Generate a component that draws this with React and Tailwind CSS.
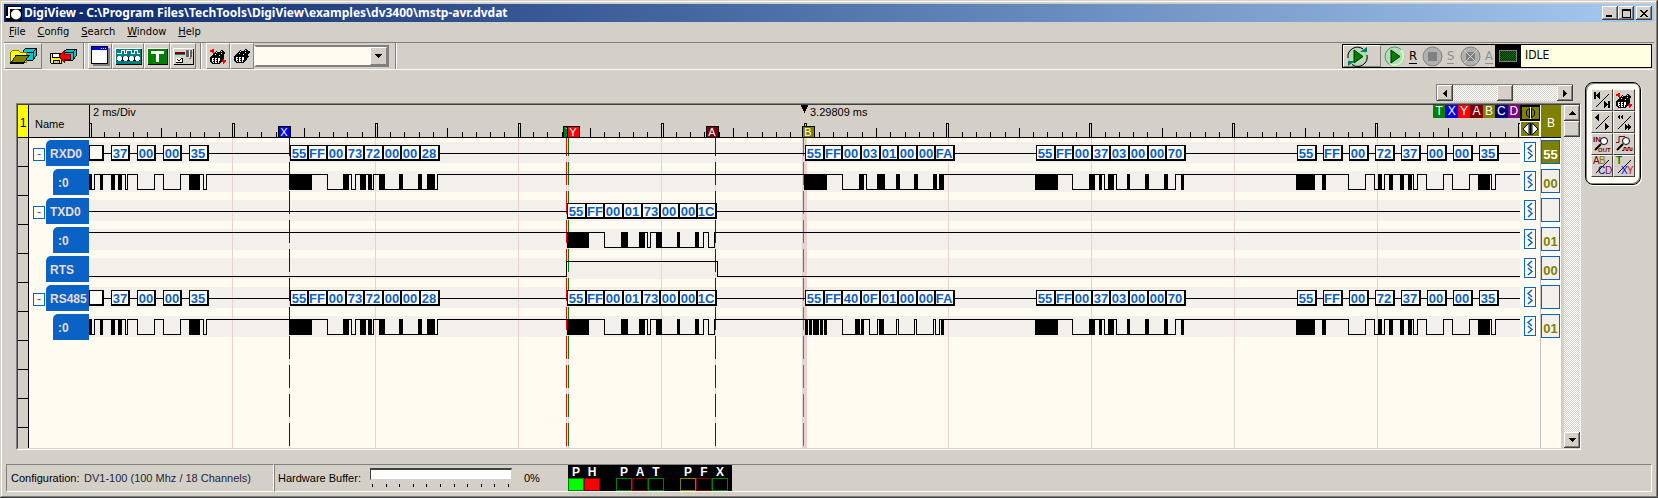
import React from "react";

const SANS = "font-['DejaVu_Sans_Condensed','DejaVu_Sans',sans-serif]";
const ARIAL = "font-['Liberation_Sans',sans-serif]";
const RAISED =
  "bg-[#d4d0c8] border border-t-white border-l-white border-b-[#808080] border-r-[#808080]";
const WIN_BTN =
  "bg-[#d4d0c8] shadow-[inset_-1px_-1px_0_#404040,inset_1px_1px_0_#fff,inset_-2px_-2px_0_#808080]";
const TRACK =
  "bg-[repeating-conic-gradient(#fff_0_25%,#d4d0c8_0_50%)] bg-[length:2px_2px]";

const COLORS = { k: "#000000", w: "#ffffff", r: "#ff0000" };

function Pixels({ rows, className }) {
  const w = Math.max(...rows.map((r) => r.length));
  const rects = [];
  rows.forEach((row, y) => {
    let x = 0;
    while (x < row.length) {
      const ch = row[x];
      let e = x + 1;
      while (e < row.length && row[e] === ch) e++;
      if (COLORS[ch]) rects.push(<rect key={x + "-" + y} x={x} y={y} width={e - x} height="1" fill={COLORS[ch]} />);
      x = e;
    }
  });
  return (
    <svg width={w} height={rows.length} shapeRendering="crispEdges" aria-hidden="true" className={className}>
      {rects}
    </svg>
  );
}

const BINOC = [
  "...........kk...",
  "......k...kwkk..",
  ".....kwkkkkkkkkk",
  "....kkkkkkkwkkkk",
  "...kkwkkkkkkkkk.",
  "..kkkkkkkwkkkk..",
  ".kkkkkkkkkkkkk..",
  "kkkkkkkkkkkkkkk.",
  "kkwwkwwkwwkkkk..",
  "kkwkkwkkwwkkk...",
  "kkwwkwwkwwkkk...",
  "kkwkkwkkwkkk....",
  ".kkwkwwkwkk.....",
  "..kkkkkkkk......",
];

const BINOC_RED = [
  "..rr............",
  "rrrr.......kk...",
  "rrrr..k...kwkk..",
  "..rr.kwkkkkkkkk.",
  "...rkkkkkkkwkkk.",
  "...kkwkkkkkkkk..",
  "..kkkkkkkwkkkk..",
  ".kkkkkkkkkkkkk..",
  "kkkkkkkkkkkkkk..",
  "kkwwkwwkwwkkkk..",
  "kkwkkwkkwwkkkr..",
  "kkwwkwwkwwkkrrrr",
  "kkwkkwkkwkkkrrrr",
  ".kkwkwwkwkk..rr.",
  "..kkkkkkkk...r..",
];

function OpenIcon() {
  return (
    <svg width="28" height="16" aria-hidden="true" shapeRendering="crispEdges">
      <path d="M14 3l3-3h10v8l-3 4h-9z" fill="#00c8d0" stroke="#000" />
      <path d="M15 4h9l3-3M24 4v8" fill="none" stroke="#000" />
      <path d="M1 14V5l3-3h5l2 2h6v10z" fill="#ffff00" stroke="#808000" />
      <path d="M2 14.500l5-7h13l-5 7z" fill="#808000" stroke="#000" />
      <path d="M1 15h14" stroke="#000" />
    </svg>
  );
}
function SaveIcon() {
  return (
    <svg width="28" height="17" aria-hidden="true" shapeRendering="crispEdges">
      <path d="M15 4l3-3h9v7l-3 4h-9z" fill="#00c8d0" stroke="#000" />
      <path d="M15 4h9l3-3M24 4v8" fill="none" stroke="#000" />
      <path d="M1 5h11v10H2l-1-1z" fill="#ffff00" stroke="#000" />
      <path d="M3 5h7v4H3z" fill="#fff" stroke="#000" />
      <path d="M4 12h6v3H4z" fill="#c0c0c0" stroke="#000" />
      <path d="M10 8l5-5v3h6v5h-6v3z" fill="#ff0000" stroke="#800000" />
    </svg>
  );
}
function WindowIcon() {
  return (
    <svg width="19" height="20" aria-hidden="true" shapeRendering="crispEdges">
      <path d="M2 2h17v18H2z" fill="#808080" />
      <path d="M0 0h17v18H0z" fill="#000" />
      <path d="M1 4h15v13H1z" fill="#fff" />
      <path d="M1 1h15v3H1z" fill="#0000ff" />
      <path d="M10 2h1v1h-1zM12 2h1v1h-1zM14 2h1v1h-1z" fill="#fff" />
    </svg>
  );
}
function DeviceIcon() {
  return (
    <svg width="27" height="17" aria-hidden="true" shapeRendering="crispEdges">
      <path d="M1 1h26v16H1z" fill="#000" />
      <path d="M0 0h26v16H0z" fill="#fff" />
      <path d="M1 1h25v15H1z" fill="#008080" />
      <path d="M2 5.500h4v-3h3v3h2v-3h5v3h3v-3h3v3h3" fill="none" stroke="#fff" />
      <path d="M2 9h23v4H2z" fill="#000" />
      {[2, 8, 14, 20].map((x) => (
        <path key={x} d={`M${x + 1} 8h3v1h1v3h-1v1h-3v-1h-1v-3h1z`} fill="#fff" />
      ))}
    </svg>
  );
}
function TriggerIcon() {
  return (
    <svg width="21" height="17" aria-hidden="true" shapeRendering="crispEdges">
      <path d="M1 1h20v16H1z" fill="#000" />
      <path d="M0 0h20v16H0z" fill="#fff" />
      <path d="M1 1h19v15H1z" fill="#008000" />
      <path d="M4 3h13v3h-5v8H9V6H4z" fill="#fff" />
    </svg>
  );
}
function OptionsIcon() {
  return (
    <svg width="21" height="17" aria-hidden="true" shapeRendering="crispEdges">
      <path d="M1 1h20v16H1z" fill="#000" />
      <path d="M0 0h20v16H0z" fill="#fff" />
      <path d="M1 1h19v15H1z" fill="#d4d0c8" />
      <path d="M2 4h10v2H2z" fill="#800000" />
      <path d="M2 6h10v1H2z" fill="#008080" />
      <path d="M13 2h6v7h-1v2h-2v-2h-3z" fill="#606060" />
      <path d="M16 2h1v8h-1z" fill="#fff" />
      <path d="M3 9.500h6v5H3z" fill="#fff" />
      <path d="M3 14.500h6v-5" fill="none" stroke="#000" />
      <path d="M4 11l2 2 3-3" fill="none" stroke="#000" />
    </svg>
  );
}

function Round({ kind }) {
  const on = kind === "play";
  return (
    <svg width="21" height="21" aria-hidden="true" className="shrink-0">
      <circle cx="10.500" cy="10.500" r="9.500" fill={on ? "#b4dcb8" : "#b0b0b0"} stroke={on ? "#40a070" : "#808080"} />
      {on && <path d="M17 4a9 9 0 0 1-11 14" fill="none" stroke="#d8f8c0" strokeWidth="2" />}
      {on && <path d="M7 4l9 6.500-9 6.500z" fill="#008000" stroke="#003000" />}
      {kind === "stop" && <path d="M6 6h9v9H6z" fill="#808080" />}
      {kind === "abort" && <path d="M6 6h9v9H6z" fill="#808080" />}
      {kind === "abort" && <path d="M4 4l13 13M17 4L4 17" stroke="#d0d0d0" />}
    </svg>
  );
}
function LoopIcon() {
  return (
    <svg width="21" height="21" aria-hidden="true">
      <circle cx="10.500" cy="10.500" r="9" fill="#b4dcb8" stroke="#a0d0a0" />
      <path d="M1 12a9.500 9.500 0 0 1 15-9M20 9a9.500 9.500 0 0 1-15 9.500" fill="none" stroke="#000" />
      <path d="M13 6h7V1zM8 15H1v5z" fill="#008060" />
      <path d="M7 4l9 6.500-9 6.500z" fill="#008000" stroke="#003000" />
    </svg>
  );
}

function Tri({ dir }) {
  const d = {
    up: "M3 0h1v1h1v1h1v1h1v1H0V3h1V2h1V1h1z",
    down: "M0 0h7v1H6v1H5v1H4v1H3V3H2V2H1V1H0z",
    left: "M0 3h1V2h1V1h1V0h1v7H3V6H2V5H1V4H0z",
    right: "M4 3H3V2H2V1H1V0H0v7h1V6h1V5h1V4h1z",
  }[dir];
  const v = dir === "up" || dir === "down";
  return (
    <svg width={v ? 7 : 4} height={v ? 4 : 7} shapeRendering="crispEdges" aria-hidden="true">
      <path d={d} fill="#000" />
    </svg>
  );
}

/* ---- capture data ---------------------------------------------------- */

const frame = (xs, vals) => vals.map((v, i) => [xs[i], xs[i + 1] - xs[i] + (i < vals.length - 1 ? 1 : 0), v]);
const spaced = (x0, vals) => vals.map((v, i) => [x0 + 26 * i, 20, v]);

const HEAD = [[89, 15, ""], [111, 19, "37"], [137, 19, "00"], [163, 19, "00"], [189, 20, "35"]];
const REQ = frame([290, 308, 327, 346, 364, 383, 401, 420, 440], ["55", "FF", "00", "73", "72", "00", "00", "28"]);
const TX = frame([567, 586, 604, 623, 642, 660, 679, 697, 717], ["55", "FF", "00", "01", "73", "00", "00", "1C"]);
const BX = [805, 824, 842, 861, 880, 898, 917, 935, 955];
const RESP_A = frame(BX, ["55", "FF", "00", "03", "01", "00", "00", "FA"]);
const RESP_B = frame(BX, ["55", "FF", "40", "0F", "01", "00", "00", "FA"]);
const POLL = frame([1036, 1055, 1073, 1092, 1110, 1129, 1148, 1166, 1186], ["55", "FF", "00", "37", "03", "00", "00", "70"]);
const TAIL = spaced(1297, ["55", "FF", "00", "72", "37", "00", "00", "35"]);

const W_HEAD = "B92 L94 H100 B103 H111 B115 H118 B122 H125 L127 H137 L154 H163 L180 H189 B200 H203 L206";
const W_REQ = "H289 B312 H327 L343 B349 H351 L355 H360 B366 H368 B372 L373 H379 B385 L399 B403 L418 B422 L427 B435 L437";
const W_TX = "H567 B589 H604 L621 B628 L639 B645 H647 L650 H656 B662 L677 B680 L695 B699 L703 H708 L714";
const W_RA = "H804 B827 H842 L859 B864 H866 L877 B885 L896 B900 L914 B918 L933 B937 L939 B944";
const W_RB = "H805 B808 H809 B812 H813 B819 H820 B823 H824 B827 H842 L855 B860 L861 B864 H869 L877 H879 B884 L896 H898 L914 H916 L933 H935 L939 H941 B944";
const W_POLL = "H1035 B1058 H1072 L1089 B1095 H1099 B1102 H1104 L1108 B1114 H1116 L1127 B1130 L1145 B1149 L1164 B1168 L1175 H1181 B1184";
const W_TAIL = "H1296 B1315 H1322 B1326 H1348 L1365 H1374 L1378 B1382 L1384 H1389 B1393 H1400 B1404 H1408 B1412 H1413 L1417 H1426 L1443 H1452 L1469 H1478 B1490 H1491 L1495 H4000";

const CHANNELS = [
  { name: "RXD0", group: true, value: "55", hot: true, bytes: [...HEAD, ...REQ, ...RESP_A, ...POLL, ...TAIL] },
  { name: ":0", value: "00", wave: [W_HEAD, W_REQ, W_RA, W_POLL, W_TAIL] },
  { name: "TXD0", group: true, value: "", bytes: TX },
  { name: ":0", value: "01", wave: [W_TX, "H4000"] },
  { name: "RTS", value: "00", wave: ["L566 H717 L4000"] },
  { name: "RS485", group: true, value: "", bytes: [...HEAD, ...REQ, ...TX, ...RESP_B, ...POLL, ...TAIL] },
  { name: ":0", value: "01", wave: [W_HEAD, W_REQ, W_TX, W_RB, W_POLL, W_TAIL] },
];

const CURSORS = [
  [289, "#0000ff"], [566, "#ff0000"], [568, "#008000"], [715, "#800000"], [803, "#808000"],
];
const MARKERS = [
  ["T", 563, "#008000"], ["X", 278, "#0000ff"], ["Y", 567, "#ff0000"], ["A", 706, "#800000"], ["B", 802, "#808000"],
];
const GRID = [232, 375, 518, 661, 948, 1091, 1234, 1377, 1520, 1663, 1806, 1949];

function Wave({ top, parts }) {
  const hi = top + 5;
  const lo = top + 20;
  let x = 89;
  let prev = "";
  const out = [];
  parts.join(" ").split(" ").forEach((seg, i) => {
    const kind = seg[0];
    const end = Number(seg.slice(1));
    if (kind === "B") out.push(<rect key={i} x={x} y={hi} width={end - x} height="16" />);
    else {
      out.push(<rect key={i} x={x} y={kind === "H" ? hi : lo} width={end - x} height="1" />);
      if (prev && prev !== kind && prev !== "B") out.push(<rect key={i + "e"} x={x} y={hi} width="1" height="16" />);
    }
    prev = kind;
    x = end;
  });
  return <g>{out}</g>;
}

function Bytes({ top, items }) {
  return (
    <g>
      <rect x="89" y={top + 13} width="4000" height="1" />
      {items.map(([x, w, v]) => (
        <g key={x}>
          <rect x={x} y={top + 5} width={w} height="16" />
          <rect x={x + 1} y={top + 6} width={w - 3} height="13" fill="#fffbf0" />
          <text x={x + Math.floor((w - 1) / 2)} y={top + 18} textAnchor="middle" fill="#0a62c4"
            className={ARIAL + " text-[13px] font-bold"}>{v}</text>
        </g>
      ))}
    </g>
  );
}

function Plot() {
  return (
    <svg className="block w-0 min-w-0 flex-1 self-stretch overflow-hidden" shapeRendering="crispEdges" role="img" aria-label="Captured signals">
      <g transform="translate(-89 -138)">
        {CHANNELS.map((c, i) => (
          <rect key={i} x="89" y={142 + 29 * i} width="4000" height="21" fill="#f3f0ec" />
        ))}
        {GRID.map((x) => <rect key={x} x={x} y="138" width="1" height="2000" fill="#e6d3d1" />)}
        <rect x="802" y="138" width="5" height="2000" fill="#e6d3d1" />
        {CURSORS.map(([x, color]) => (
          <g key={x}>
            <rect x={x} y="138" width="1" height="2000" fill="#e6d3d1" />
            <path d={`M${x}.500 133V446`} stroke={color} strokeDasharray="23 6" fill="none" />
          </g>
        ))}
        {CHANNELS.map((c, i) => c.bytes
          ? <Bytes key={i} top={140 + 29 * i} items={c.bytes} />
          : <Wave key={i} top={140 + 29 * i} parts={c.wave} />)}
      </g>
    </svg>
  );
}

function Ruler() {
  const ticks = [];
  for (let n = 0; n < 140; n++) {
    const x = Math.round(90 + 14.29 * n);
    if (n % 10 === 0) ticks.push(<path key={n} d={`M${x - 1}.500 137V123.500h2V137`} fill="#d4d0c8" stroke="#000" />);
    else ticks.push(<rect key={n} x={x} y={n % 5 === 0 ? 128 : 132} width="1" height={n % 5 === 0 ? 9 : 5} />);
  }
  return (
    <svg className="absolute inset-0 h-full w-full" shapeRendering="crispEdges" role="img" aria-label="Time ruler">
      <g transform="translate(-89 -105)">
        <rect x="89" y="105" width="1" height="33" />
        {ticks}
        {MARKERS.map(([t, x, color]) => (
          <g key={t}>
            <rect x={x} y="126" width="13" height="12" />
            <rect x={x + 1} y="127" width="11" height="11" fill={color} />
            <text x={x + 6} y="136" textAnchor="middle" fill="#fff" className={ARIAL + " text-[11px]"}>{t}</text>
          </g>
        ))}
        <path d="M801 105h7v2h-1v2h-1v2h-1v2h-1v-2h-1v-2h-1v-2h-1z" />
        <text x="93" y="116" className={ARIAL + " text-[11px]"}>2 ms/Div</text>
        <text x="810" y="116" className={ARIAL + " text-[11px]"}>3.29809 ms</text>
      </g>
    </svg>
  );
}

/* ---- chrome ----------------------------------------------------------- */

function TitleBar() {
  return (
    <header className="flex h-[18px] shrink-0 items-center bg-linear-to-r from-[#0a246a] to-[#a6caf0] pr-[2px] pl-[2px]">
      <svg width="16" height="16" aria-hidden="true">
        <path d="M0 1h16v15H0z" fill="#000" />
        <path d="M0 12h3V3h12" fill="none" stroke="#fff" strokeWidth="2" />
        <circle cx="10" cy="9.500" r="5" fill="#fff" />
      </svg>
      <h1 className="ml-[2px] flex-1 truncate font-['Noto_Sans',sans-serif] text-[12px] leading-4 font-bold text-white">
        DigiView - C:\Program Files\TechTools\DigiView\examples\dv3400\mstp-avr.dvdat
      </h1>
      <div className="flex">
        <button aria-label="Minimize" className={WIN_BTN + " flex h-[14px] w-4 items-end pb-[3px] pl-1"}>
          <span className="h-[2px] w-[6px] bg-black" />
        </button>
        <button aria-label="Maximize" className={WIN_BTN + " flex h-[14px] w-4 items-center justify-center"}>
          <span className="h-[9px] w-[9px] border border-t-2 border-black" />
        </button>
        <button aria-label="Close" className={WIN_BTN + " ml-[2px] flex h-[14px] w-4 items-center justify-center"}>
          <svg width="8" height="7" shapeRendering="crispEdges" aria-hidden="true">
            <path d="M0 0h2v1h1v1h2V1h1V0h2v1H7v1H6v1H5v1h1v1h1v1h1v1H6V6H5V5H3v1H2v1H0V6h1V5h1V4h1V3H2V2H1V1H0z" />
          </svg>
        </button>
      </div>
    </header>
  );
}

function ToolButton({ label, children, wide }) {
  return (
    <button aria-label={label} className={RAISED + " flex h-[26px] items-center justify-center " + wide}>
      {children}
    </button>
  );
}
const Divider = () => <span className="h-[26px] w-[2px] border-r border-l border-l-[#808080] border-r-white" />;

function Toolbar() {
  return (
    <div className="flex h-7 shrink-0 items-center border-t border-b border-t-[#808080] border-b-white">
      <ToolButton label="Open" wide="w-[38px]"><OpenIcon /></ToolButton>
      <button aria-label="Save" className="flex h-[26px] w-[41px] items-center justify-center"><SaveIcon /></button>
      <Divider />
      <div className="ml-[3px] flex">
        <ToolButton label="Window" wide="w-6"><WindowIcon /></ToolButton>
        <ToolButton label="Device" wide="w-8"><DeviceIcon /></ToolButton>
        <ToolButton label="Trigger" wide="w-[26px]"><TriggerIcon /></ToolButton>
        <ToolButton label="Options" wide="w-[26px]"><OptionsIcon /></ToolButton>
      </div>
      <span className="w-1" />
      <Divider />
      <div className="ml-1 flex">
        <ToolButton label="Find next edge" wide="w-6"><Pixels rows={BINOC_RED} /></ToolButton>
        <ToolButton label="Find" wide="w-6"><Pixels rows={BINOC} /></ToolButton>
      </div>
      <div className="flex h-[22px] w-[135px] border-2 border-t-[#808080] border-r-[#808080] border-b-[#808080] border-l-white bg-[#fffbf0]">
        <input aria-label="Search pattern" className="w-0 flex-1 bg-transparent px-1 text-[11px] outline-none" />
        <button aria-label="Show patterns" className={RAISED + " flex w-[17px] items-center justify-center"}><Tri dir="down" /></button>
      </div>
      <span className="w-[6px]" />
      <Divider />
      <div className="mr-[2px] ml-auto flex h-6 w-[310px] items-stretch border border-black">
        <button aria-label="Run continuously" className={RAISED + " flex w-[38px] items-center pl-[3px]"}><LoopIcon /></button>
        <button className={SANS + " flex w-[38px] items-center gap-1 pl-[3px] text-[13px] leading-4"}>
          <Round kind="play" /><span className="border-b border-black leading-[14px]">R</span>
        </button>
        <button className={SANS + " flex w-[38px] items-center gap-1 pl-[3px] text-[13px] text-[#909090]"}>
          <Round kind="stop" /><span className="border-b border-[#909090] leading-[14px]">S</span>
        </button>
        <button className={SANS + " flex w-[38px] items-center gap-1 pl-[3px] text-[13px] text-[#909090]"}>
          <Round kind="abort" /><span className="border-b border-[#909090] leading-[14px]">A</span>
        </button>
        <span className="flex w-[26px] items-center justify-center bg-black">
          <span className="h-3 w-[18px] border border-[#808080] bg-[repeating-conic-gradient(#007000_0_25%,#002800_0_50%)] bg-[length:2px_2px]" />
        </span>
        <output className={SANS + " flex-1 bg-[#ffffe1] pl-1 text-[12px] leading-[21px]"}>IDLE</output>
      </div>
    </div>
  );
}

const MARKER_TAGS = [
  ["T", "bg-[#008000]"], ["X", "bg-[#0000ff]"], ["Y", "bg-[#ff0000]"], ["A", "bg-[#800000]"],
  ["B", "bg-[#808000]"], ["C", "bg-[#000080]"], ["D", "bg-[#800080]"],
];

function Names() {
  return (
    <div className="w-[60px] shrink-0">
      {CHANNELS.map((c, i) => (
        <div key={i} className="flex h-[29px] items-start pt-[2px]">
          {c.group && (
            <button aria-label={"Collapse " + c.name}
              className={ARIAL + " mt-[8px] ml-1 h-[13px] w-[12px] shrink-0 border border-[#0a62c4] text-[12px] leading-[11px] text-[#0a62c4]"}>-</button>
          )}
          <span className={(c.name === ":0" ? "w-9 pl-[5px] " : "w-[43px] pl-1 ") + ARIAL +
            " ml-auto h-[26px] overflow-hidden rounded-tl-[5px] bg-[#0a62c4] text-[12px] leading-[29px] font-bold whitespace-nowrap text-[#e8dcd8]"}>
            {c.name}
          </span>
        </div>
      ))}
    </div>
  );
}

function SideButton({ label, children }) {
  return (
    <button aria-label={label}
      className="flex h-[22px] w-[22px] items-center justify-center border border-t-white border-l-white border-b-[#404040] border-r-[#404040] bg-[#d4d0c8]">
      {children}
    </button>
  );
}
const Slash = ({ children }) => (
  <svg width="20" height="20" shapeRendering="crispEdges" aria-hidden="true">
    <path d="M4 17L17 4" stroke="#000" />
    {children}
  </svg>
);

function SidePanel() {
  const tiny = ARIAL + " text-[10px]";
  return (
    <aside className="mt-3 mr-[13px] ml-1 h-[103px] w-14 shrink-0 rounded-lg border border-black bg-[#fffbf0] p-[5px] shadow-[inset_-1px_-1px_0_#808080,inset_1px_1px_0_#808080,1px_1px_0_#fff]">
      <div className="grid grid-cols-2 pt-px">
        <SideButton label="Go to start or end">
          <Slash>
            <path d="M2 2h2v7H2zM4 5h1V4h1V3h1V2h1v7H7V8H6V7H5V6H4zM12 11h1v1h1v1h1v1h1v-3h2v7h-2v-3h-1v1h-1v1h-1v1h-1z" />
          </Slash>
        </SideButton>
        <SideButton label="Find next"><Pixels rows={BINOC_RED} /></SideButton>
        <SideButton label="Previous or next">
          <Slash><path d="M3 5h1V4h1V3h1V2h1v7H6V8H5V7H4V6H3zM13 11h1v1h1v1h1v1h1v1h-1v1h-1v1h-1v1h-1z" /></Slash>
        </SideButton>
        <SideButton label="Page back or forward">
          <Slash>
            <path d="M3 5l3-3v3l3-3v6L6 5v3zM11 12l3 3v-3l3 3-3 3v-3l-3 3z" />
          </Slash>
        </SideButton>
        <SideButton label="Zoom in or out">
          <svg width="20" height="20" aria-hidden="true">
            <text x="1" y="8" fill="#800000" className={ARIAL + " text-[8px] font-bold"}>IN</text>
            <path d="M3 16l6-6" stroke="#000" strokeWidth="2" />
            <circle cx="12" cy="7" r="3.500" fill="#fff" stroke="#000" />
            <text x="6" y="18" fill="#800000" className={ARIAL + " text-[6px] font-bold"}>OUT</text>
          </svg>
        </SideButton>
        <SideButton label="Zoom to edge">
          <svg width="20" height="20" aria-hidden="true">
            <path d="M2 8.500h3v-6h6M8 16.500h2v-3h2v3h2v-3h2v3h2v-3" fill="none" stroke="#800000" />
            <path d="M3 16l6-6" stroke="#000" strokeWidth="2" />
            <circle cx="12" cy="7" r="3.500" fill="#fff" stroke="#000" />
          </svg>
        </SideButton>
        <SideButton label="Go to marker A, B, C or D">
          <Slash>
            <text x="1" y="8" fill="#800000" className={tiny}>A</text>
            <text x="7" y="8" fill="#808000" className={tiny}>B</text>
            <text x="6" y="18" fill="#000080" className={tiny}>C</text>
            <text x="13" y="18" fill="#800080" className={tiny}>D</text>
          </Slash>
        </SideButton>
        <SideButton label="Go to marker T, X or Y">
          <Slash>
            <text x="2" y="8" fill="#008000" className={tiny + " font-bold"}>T</text>
            <text x="7" y="18" fill="#0000ff" className={tiny}>X</text>
            <text x="13" y="18" fill="#ff0000" className={tiny}>Y</text>
          </Slash>
        </SideButton>
      </div>
    </aside>
  );
}

function Scope() {
  return (
    <section className="flex min-h-0 flex-1 border border-t-[#808080] border-l-[#808080] border-r-white border-b-white">
      <div className="flex min-w-0 flex-1 border-t border-b border-l border-t-[#404040] border-l-[#404040] border-b-[#d4d0c8]">
        <div className="flex min-w-0 flex-1 flex-col">
          <div className="flex h-[33px] shrink-0 border-b border-black">
            <span className={ARIAL + " flex w-[11px] items-center justify-center border-r border-black bg-[#ffff00] pt-1 text-[12px]"}>1</span>
            <span className={ARIAL + " w-[60px] pt-[12px] pl-[6px] text-[11px] leading-[14px]"}>Name</span>
            <div className="relative flex-1">
              <Ruler />
              <div className="absolute top-0 right-0 flex w-[87px]">
                {MARKER_TAGS.map(([t, bg]) => (
                  <button key={t} className={bg + " " + ARIAL + " h-[13px] flex-1 text-[12px] leading-[13px] text-white"}>{t}</button>
                ))}
              </div>
            </div>
            <div className="flex w-[21px] flex-col border-r border-white bg-black">
              <button aria-label="Center on cursor" className="mt-[2px] ml-[2px] flex h-3 w-[17px] items-center justify-center bg-[#808000]">
                <svg width="11" height="12" aria-hidden="true">
                  <path d="M5.500 0v12" stroke="#fff" />
                  <path d="M4 1.500L1.500 4v4L4 10.500M7 1.500L9.500 4v4L7 10.500" fill="none" stroke="#000" />
                  <path d="M4.500 1v10M6.500 1v10" stroke="#000" />
                </svg>
              </button>
              <button aria-label="Step cursor" className="mt-[2px] flex h-4 items-center justify-center border border-white bg-[#808000]">
                <svg width="15" height="12" aria-hidden="true">
                  <path d="M0 6l6-6v12zM15 6L9 0v12z" fill="#fff" stroke="#000" strokeWidth="1" />
                  <path d="M7.500 0v12" stroke="#000" />
                </svg>
              </button>
            </div>
            <button className={ARIAL + " w-[20px] bg-[#808000] pt-1 text-[12px] text-white"}>B</button>
          </div>
          <div className="flex min-h-0 flex-1 overflow-hidden bg-[#fffbf0]">
            <div className="w-[11px] shrink-0 overflow-hidden border-r border-black bg-[#d4d0c8]">
              {Array.from({ length: 10 }, (_, i) => <div key={i} className="h-[29px] border-b border-black" />)}
            </div>
            <Names />
            <Plot />
            <div className="w-[21px] shrink-0 border-r border-[#c0c0c0]">
              {CHANNELS.map((c, i) => (
                <div key={i} className="h-[29px] pt-1 pl-1">
                  <button aria-label={"Signal options " + c.name}
                    className="flex h-5 w-3 items-center justify-center border border-[#0a62c4]">
                    <svg width="8" height="16" aria-hidden="true">
                      <path d="M6 1L2 4.500 6 8M2 8l4 3.500L2 15" fill="none" stroke="#0a62c4" strokeWidth="1.500" />
                    </svg>
                  </button>
                </div>
              ))}
            </div>
            <div className="w-5 shrink-0">
              {CHANNELS.map((c, i) => (
                <div key={i} className="h-[29px] pt-[2px]">
                  <div className={(c.hot ? "bg-[#808000] text-white " : "bg-[#f3f0ec] text-[#808000] ") + ARIAL +
                    " h-6 w-[19px] border border-[#0a62c4] text-center text-[13px] leading-[27px] font-bold"}>{c.value}</div>
                </div>
              ))}
            </div>
          </div>
        </div>
        <div className={"ml-[3px] flex w-4 flex-col " + TRACK}>
          <button aria-label="Scroll up" className={WIN_BTN + " flex h-4 shrink-0 items-center justify-center"}><Tri dir="up" /></button>
          <div className={WIN_BTN + " h-4 shrink-0"} />
          <div className="flex-1" />
          <button aria-label="Scroll down" className={WIN_BTN + " flex h-4 shrink-0 items-center justify-center"}><Tri dir="down" /></button>
        </div>
      </div>
    </section>
  );
}

const LEDS = [
  ["P", "border-[#008000] bg-[#00ff00]", ""],
  ["H", "border-[#800000] bg-[#ff0000]", ""],
  ["P", "border-[#008000]", "ml-4"],
  ["A", "border-[#800000]", ""],
  ["T", "border-[#008000]", ""],
  ["P", "border-[#808000]", "ml-4"],
  ["F", "border-[#800000]", ""],
  ["X", "border-[#008000]", ""],
];

function StatusBar() {
  return (
    <footer className={ARIAL + " mx-[2px] mt-[14px] mb-[2px] flex h-7 shrink-0 text-[11px] leading-[26px]"}>
      <div className="flex w-[268px] border border-t-[#808080] border-l-[#808080] border-r-white border-b-white pl-1">
        <span className="w-[73px]">Configuration:</span>
        <span className="text-[#202840]">DV1-100 (100 Mhz / 18 Channels)</span>
      </div>
      <div className="flex flex-1 border border-t-[#808080] border-l-[#808080] border-r-white border-b-white pl-[3px]">
        <span className="w-[92px]">Hardware Buffer:</span>
        <div className="w-[142px] pt-[3px]">
          <div role="progressbar" aria-label="Hardware buffer" aria-valuenow={0}
            className="h-3 border border-t-2 border-t-[#404040] border-l-[#404040] border-r-[#d4d0c8] border-b-[#d4d0c8] bg-white" />
          <div className="mt-1 flex justify-between pr-[3px] pl-[2px]">
            {Array.from({ length: 11 }, (_, i) => <span key={i} className="h-[3px] w-px bg-black" />)}
          </div>
        </div>
        <span className="w-14 pl-3">0%</span>
        <div className="flex w-[164px] bg-black">
          {LEDS.map(([t, led, gap], i) => (
            <div key={i} className={gap + " w-4 text-center"}>
              <div className="h-[13px] text-[12px] leading-[14px] font-bold text-white">{t}</div>
              <div className={led + " h-[13px] border"} />
            </div>
          ))}
        </div>
      </div>
    </footer>
  );
}

const MENUS = ["File", "Config", "Search", "Window", "Help"];

export default function App() {
  return (
    <div className="flex h-screen flex-col overflow-hidden bg-[#d4d0c8] p-1 text-black shadow-[inset_-1px_-1px_0_#404040,inset_1px_1px_0_#d4d0c8,inset_-2px_-2px_0_#808080,inset_2px_2px_0_#fff]">
      <TitleBar />
      <nav className={SANS + " flex h-5 shrink-0 items-center gap-3 pl-[5px] text-[11px] leading-5"}>
        {MENUS.map((m) => (
          <button key={m}><span className="underline">{m[0]}</span>{m.slice(1)}</button>
        ))}
      </nav>
      <Toolbar />
      <main className="flex min-h-0 flex-1 pl-3">
        <div className="flex min-w-0 flex-1 flex-col pt-[14px]">
          <div className="mb-[2px] flex h-[17px] shrink-0 justify-end pr-2">
            <div className={"flex w-[137px] border-t border-l border-[#808080] " + TRACK}>
              <button aria-label="Scroll left" className={WIN_BTN + " flex w-4 items-center justify-center"}><Tri dir="left" /></button>
              <div className="flex-1" />
              <div className={WIN_BTN + " w-4"} />
              <div className="flex-1" />
              <button aria-label="Scroll right" className={WIN_BTN + " flex w-4 items-center justify-center"}><Tri dir="right" /></button>
            </div>
          </div>
          <Scope />
        </div>
        <SidePanel />
      </main>
      <StatusBar />
    </div>
  );
}
